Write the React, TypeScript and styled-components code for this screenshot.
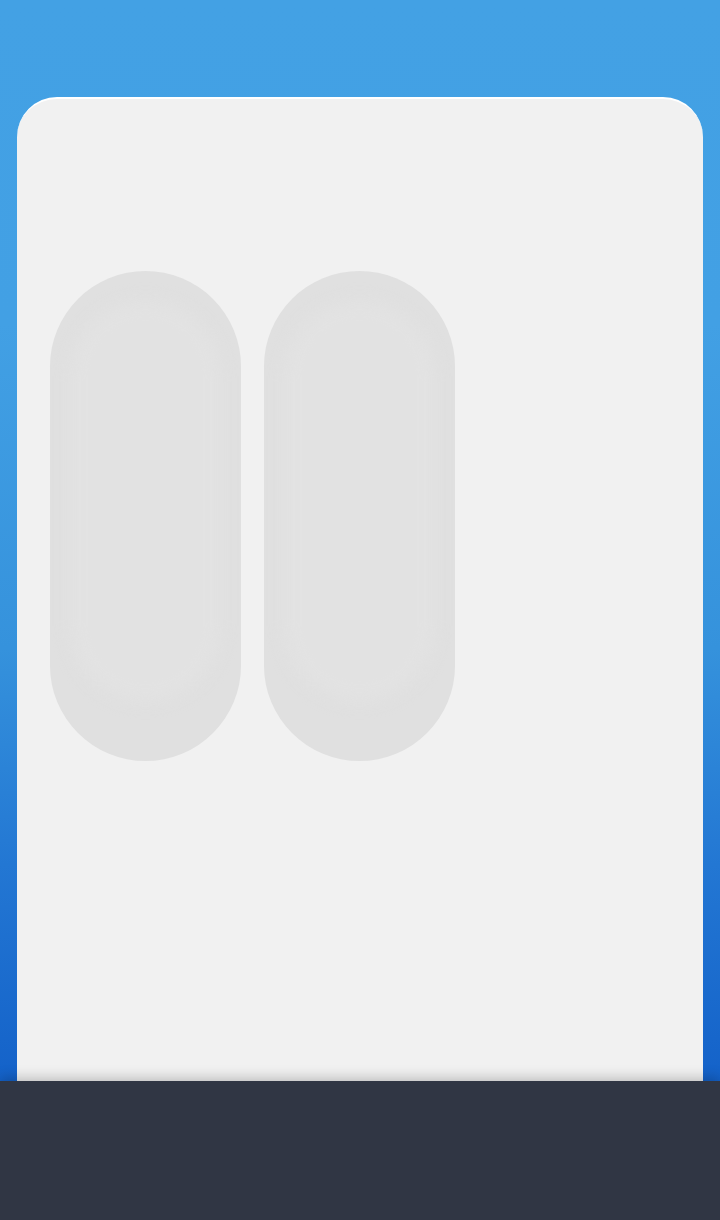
import styled, { createGlobalStyle } from "styled-components";

const GlobalStyle = createGlobalStyle`
  html, body {
    margin: 0;
    padding: 0;
    height: 100%;
  }
  body {
    font-family: "Liberation Sans", Arial, sans-serif;
    background: #303644;
  }
  #root {
    height: 100%;
  }
`;

const Page = styled.div`
  display: flex;
  flex-direction: column;
  height: 1220px;
  overflow: hidden;
`;

const Stage = styled.main`
  flex: 1;
  display: flex;
  flex-direction: column;
  padding: 97px 17px 0;
  background: linear-gradient(
    to bottom,
    #43a1e4 0%,
    #42a0e4 30%,
    #3592dc 60%,
    #2377d3 80%,
    #1462c9 100%
  );
`;

const Card = styled.section`
  flex: 1;
  box-sizing: border-box;
  background: #f1f1f1;
  border-top: 2px solid #ffffff;
  border-radius: 40px 40px 0 0;
  padding: 172px 33px 0;
  display: flex;
  gap: 23px;
  align-items: flex-start;
`;

const Pill = styled.div`
  position: relative;
  width: 191px;
  height: 490px;
  border-radius: 96px;
  background: #e0e0e0;
  overflow: hidden;

  &::after {
    content: "";
    position: absolute;
    inset: 30px 20px 60px;
    border-radius: 76px;
    background: #e2e2e2;
    filter: blur(8px);
  }
`;

const Footer = styled.footer`
  height: 139px;
  flex: none;
  background: #303644;
  position: relative;
  box-shadow: 0 -3px 12px rgba(0, 0, 0, 0.22);
`;

export default function App() {
  return (
    <>
      <GlobalStyle />
      <Page>
        <Stage>
          <Card>
            <Pill />
            <Pill />
          </Card>
        </Stage>
        <Footer />
      </Page>
    </>
  );
}
